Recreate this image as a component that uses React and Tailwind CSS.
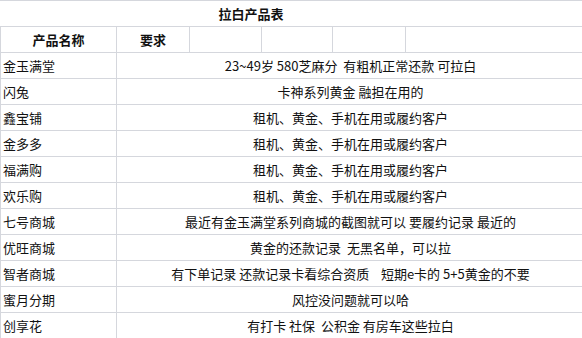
const rows = [
  ['金玉满堂', '23~49岁 580芝麻分  有粗机正常还款 可拉白'],
  ['闪兔', '卡神系列黄金 融担在用的'],
  ['鑫宝铺', '租机、黄金、手机在用或履约客户'],
  ['金多多', '租机、黄金、手机在用或履约客户'],
  ['福满购', '租机、黄金、手机在用或履约客户'],
  ['欢乐购', '租机、黄金、手机在用或履约客户'],
  ['七号商城', '最近有金玉满堂系列商城的截图就可以 要履约记录 最近的'],
  ['优旺商城', '黄金的还款记录  无黑名单，可以拉'],
  ['智者商城', '有下单记录 还款记录卡看综合资质    短期e卡的 5+5黄金的不要'],
  ['蜜月分期', '风控没问题就可以哈'],
  ['创享花', '有打卡 社保  公积金 有房车这些拉白'],
]

export default function App() {
  return (
    <div className="w-[582px] h-[338px] overflow-hidden bg-white text-[13px] leading-none text-[#111] font-['Noto_Sans_CJK_SC','Noto_Sans',sans-serif]">
      {/* title row, merged */}
      <div className="flex h-[26px] border-t border-[#d5d7dd]">
        <div className="w-[502px] flex items-center justify-center font-bold">拉白产品表</div>
      </div>

      {/* header row */}
      <div className="flex h-[26px] border-t border-l border-[#d5d7dd] font-bold">
        <div className="w-[116px] flex items-center justify-center border-r border-[#d5d7dd]">产品名称</div>
        <div className="w-[73px] flex items-center justify-center border-r border-[#d5d7dd]">要求</div>
        <div className="w-[72px] border-r border-[#d5d7dd]" />
        <div className="w-[71px] border-r border-[#d5d7dd]" />
        <div className="w-[73px] border-r border-[#d5d7dd]" />
        <div className="flex-1" />
      </div>

      {rows.map(([name, req]) => (
        <div key={name} className="flex h-[26px] border-t border-l border-[#d5d7dd]">
          <div className="w-[116px] flex items-center pl-[2px] border-r border-[#d5d7dd]">{name}</div>
          <div className="flex-1 flex items-center justify-center pl-[2px] whitespace-pre">{req}</div>
        </div>
      ))}
    </div>
  )
}
